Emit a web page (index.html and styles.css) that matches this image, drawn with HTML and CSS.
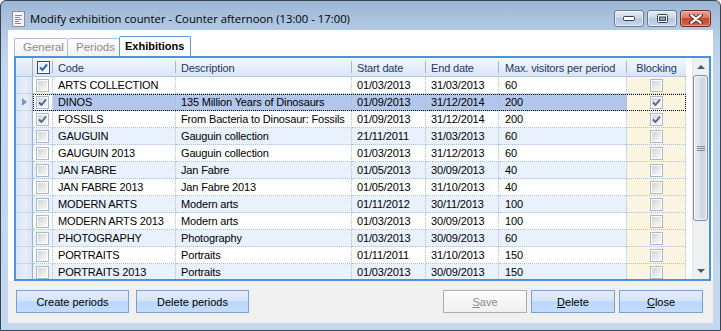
FILE: index.html
```html
<!DOCTYPE html>
<html>
<head>
<meta charset="utf-8">
<link rel="stylesheet" href="styles.css">
</head>
<body>
<div class="window">
  <div class="titlebar">
    <svg class="app-icon" width="13" height="16" viewBox="0 0 13 16">
      <rect x="0.5" y="0.5" width="12" height="15" fill="#ebe9f4" stroke="#8f8aa8"/>
      <rect x="1.5" y="1.5" width="10" height="13" fill="#f7f6fb"/>
      <line x1="3" y1="4.5" x2="10" y2="4.5" stroke="#8a86a4"/>
      <line x1="3" y1="6.5" x2="8" y2="6.5" stroke="#8a86a4"/>
      <line x1="3" y1="8.5" x2="10" y2="8.5" stroke="#8a86a4"/>
      <line x1="3" y1="10.5" x2="7" y2="10.5" stroke="#8a86a4"/>
      <line x1="3" y1="12.5" x2="9" y2="12.5" stroke="#8a86a4"/>
    </svg>
    <div class="title">Modify exhibition counter - Counter afternoon (13:00 - 17:00)</div>
    <div class="caption-buttons">
      <div class="cap-btn">
        <svg width="12" height="5" viewBox="0 0 12 5"><rect x="0.5" y="0.5" width="11" height="4" rx="1" fill="#fff" stroke="#34404f"/></svg>
      </div>
      <div class="cap-btn">
        <svg width="11" height="9" viewBox="0 0 11 9"><rect x="0.5" y="0.5" width="10" height="8" rx="1" fill="#fff" stroke="#34404f"/><rect x="2.5" y="3" width="6" height="3.5" fill="#8ea3bd" stroke="#34404f"/></svg>
      </div>
      <div class="cap-btn close">
        <svg width="14" height="10" viewBox="0 0 14 10"><path d="M2 1 L12 9 M12 1 L2 9" stroke="#5a1e16" stroke-width="4" stroke-linecap="round"/><path d="M2.2 1.2 L11.8 8.8 M11.8 1.2 L2.2 8.8" stroke="#fff" stroke-width="2.2" stroke-linecap="round"/></svg>
      </div>
    </div>
  </div>

  <div class="client">
    <div class="top">
      <div class="tabs">
        <div class="tab">General</div>
        <div class="tab">Periods</div>
        <div class="tab active">Exhibitions</div>
      </div>
      <div class="page">
        <div class="table">
          <div class="row head">
            <div class="rh"></div>
            <div class="c chk"><span class="cb head-cb"><svg width="9" height="9" viewBox="0 0 9 9"><path d="M1 4.5 L3.5 7 L8 1.5" fill="none" stroke="#2f66b6" stroke-width="2"/></svg></span></div>
            <div class="c code">Code</div>
            <div class="c desc">Description</div>
            <div class="c start">Start date</div>
            <div class="c end">End date</div>
            <div class="c max">Max. visitors per period</div>
            <div class="c block">Blocking</div>
          </div>

          <div class="row">
            <div class="rh"></div>
            <div class="c chk"><span class="cb"></span></div>
            <div class="c code">ARTS COLLECTION</div>
            <div class="c desc"></div>
            <div class="c start">01/03/2013</div>
            <div class="c end">31/03/2013</div>
            <div class="c max">60</div>
            <div class="c block"><span class="cb"></span></div>
          </div>

          <div class="row alt selected">
            <div class="rh"><span class="arrow"></span></div>
            <div class="c chk"><span class="cb"><svg width="9" height="9" viewBox="0 0 9 9"><path d="M1 4.5 L3.5 7 L8 1.5" fill="none" stroke="#51627f" stroke-width="1.8"/></svg></span></div>
            <div class="c code">DINOS</div>
            <div class="c desc">135 Million Years of Dinosaurs</div>
            <div class="c start">01/09/2013</div>
            <div class="c end">31/12/2014</div>
            <div class="c max">200</div>
            <div class="c block"><span class="cb"><svg width="9" height="9" viewBox="0 0 9 9"><path d="M1 4.5 L3.5 7 L8 1.5" fill="none" stroke="#51627f" stroke-width="1.8"/></svg></span></div>
          </div>

          <div class="row">
            <div class="rh"></div>
            <div class="c chk"><span class="cb"><svg width="9" height="9" viewBox="0 0 9 9"><path d="M1 4.5 L3.5 7 L8 1.5" fill="none" stroke="#51627f" stroke-width="1.8"/></svg></span></div>
            <div class="c code">FOSSILS</div>
            <div class="c desc">From Bacteria to Dinosaur: Fossils</div>
            <div class="c start">01/09/2013</div>
            <div class="c end">31/12/2014</div>
            <div class="c max">200</div>
            <div class="c block"><span class="cb"><svg width="9" height="9" viewBox="0 0 9 9"><path d="M1 4.5 L3.5 7 L8 1.5" fill="none" stroke="#51627f" stroke-width="1.8"/></svg></span></div>
          </div>

          <div class="row alt">
            <div class="rh"></div>
            <div class="c chk"><span class="cb"></span></div>
            <div class="c code">GAUGUIN</div>
            <div class="c desc">Gauguin collection</div>
            <div class="c start">21/11/2011</div>
            <div class="c end">31/03/2013</div>
            <div class="c max">60</div>
            <div class="c block"><span class="cb"></span></div>
          </div>

          <div class="row">
            <div class="rh"></div>
            <div class="c chk"><span class="cb"></span></div>
            <div class="c code">GAUGUIN 2013</div>
            <div class="c desc">Gauguin collection</div>
            <div class="c start">01/03/2013</div>
            <div class="c end">31/12/2013</div>
            <div class="c max">60</div>
            <div class="c block"><span class="cb"></span></div>
          </div>

          <div class="row alt">
            <div class="rh"></div>
            <div class="c chk"><span class="cb"></span></div>
            <div class="c code">JAN FABRE</div>
            <div class="c desc">Jan Fabre</div>
            <div class="c start">01/05/2013</div>
            <div class="c end">30/09/2013</div>
            <div class="c max">40</div>
            <div class="c block"><span class="cb"></span></div>
          </div>

          <div class="row">
            <div class="rh"></div>
            <div class="c chk"><span class="cb"></span></div>
            <div class="c code">JAN FABRE 2013</div>
            <div class="c desc">Jan Fabre 2013</div>
            <div class="c start">01/05/2013</div>
            <div class="c end">31/10/2013</div>
            <div class="c max">40</div>
            <div class="c block"><span class="cb"></span></div>
          </div>

          <div class="row alt">
            <div class="rh"></div>
            <div class="c chk"><span class="cb"></span></div>
            <div class="c code">MODERN ARTS</div>
            <div class="c desc">Modern arts</div>
            <div class="c start">01/11/2012</div>
            <div class="c end">30/11/2013</div>
            <div class="c max">100</div>
            <div class="c block"><span class="cb"></span></div>
          </div>

          <div class="row">
            <div class="rh"></div>
            <div class="c chk"><span class="cb"></span></div>
            <div class="c code">MODERN ARTS 2013</div>
            <div class="c desc">Modern arts</div>
            <div class="c start">01/03/2013</div>
            <div class="c end">30/09/2013</div>
            <div class="c max">100</div>
            <div class="c block"><span class="cb"></span></div>
          </div>

          <div class="row alt">
            <div class="rh"></div>
            <div class="c chk"><span class="cb"></span></div>
            <div class="c code">PHOTOGRAPHY</div>
            <div class="c desc">Photography</div>
            <div class="c start">01/03/2013</div>
            <div class="c end">30/09/2013</div>
            <div class="c max">60</div>
            <div class="c block"><span class="cb"></span></div>
          </div>

          <div class="row">
            <div class="rh"></div>
            <div class="c chk"><span class="cb"></span></div>
            <div class="c code">PORTRAITS</div>
            <div class="c desc">Portraits</div>
            <div class="c start">01/11/2011</div>
            <div class="c end">31/10/2013</div>
            <div class="c max">150</div>
            <div class="c block"><span class="cb"></span></div>
          </div>

          <div class="row alt">
            <div class="rh"></div>
            <div class="c chk"><span class="cb"></span></div>
            <div class="c code">PORTRAITS 2013</div>
            <div class="c desc">Portraits</div>
            <div class="c start">01/03/2013</div>
            <div class="c end">30/09/2013</div>
            <div class="c max">150</div>
            <div class="c block"><span class="cb"></span></div>
          </div>
        </div>

        <div class="scrollbar">
          <div class="sb-btn"><span class="tri up"></span></div>
          <div class="sb-thumb"><span class="grip"></span><span class="grip"></span><span class="grip"></span></div>
          <div class="sb-track"></div>
          <div class="sb-btn"><span class="tri down"></span></div>
        </div>
      </div>
    </div>

    <div class="buttons">
      <div class="btn wide">Create periods</div>
      <div class="btn wide">Delete periods</div>
      <div class="spacer"></div>
      <div class="btn disabled"><u>S</u>ave</div>
      <div class="btn"><u>D</u>elete</div>
      <div class="btn"><u>C</u>lose</div>
    </div>
  </div>
</div>
</body>
</html>
```

FILE: styles.css
```css
* { box-sizing: border-box; }

html, body {
  margin: 0;
  padding: 0;
  background: #ffffff;
}

body {
  font-family: "Liberation Sans", Arial, sans-serif;
  font-size: 11px;
  color: #000;
}

.window {
  width: 721px;
  height: 331px;
  display: flex;
  flex-direction: column;
  border: 1px solid #3a4350;
  border-radius: 6px 6px 0 0;
  padding: 0 7px 7px;
  background: linear-gradient(#9bb6d5 0px, #b3cae4 29px, #c2d6ed 60px, #c4d8ee 100%);
}

/* ---------- title bar ---------- */
.titlebar {
  height: 29px;
  display: flex;
  align-items: flex-start;
  flex-shrink: 0;
}

.app-icon {
  margin: 10px 0 0 4px;
  flex-shrink: 0;
}

.title {
  margin: 9px 0 0 5px;
  font-family: "Open Sans", "Noto Sans", sans-serif;
  font-size: 11.3px;
  line-height: 18px;
  color: #000;
  white-space: nowrap;
  flex: 1;
}

.caption-buttons {
  display: flex;
  gap: 3px;
  margin: 9px 2px 0 0;
}

.cap-btn {
  width: 30px;
  height: 17px;
  border: 1px solid #6b7b92;
  border-radius: 3px;
  display: flex;
  align-items: center;
  justify-content: center;
  background: linear-gradient(#e4ecf6 0%, #cbd9ea 45%, #b4c8e1 50%, #c6d7eb 100%);
  box-shadow: inset 0 0 0 1px rgba(255,255,255,0.55);
}

.cap-btn.close {
  width: 31px;
  border-color: #6e2a20;
  background: linear-gradient(#e9a493 0%, #d77a66 45%, #c44a35 50%, #d1624d 100%);
  box-shadow: inset 0 0 0 1px rgba(255,210,200,0.5);
}

/* ---------- client ---------- */
.client {
  flex: 1;
  display: flex;
  flex-direction: column;
  background: #f0f0f0;
}

.top {
  background: #ffffff;
  padding: 0 2px 0 6px;
}

.tabs {
  height: 26px;
  display: flex;
  align-items: flex-end;
}

.tab {
  height: 18px;
  padding: 0 0 0 8px;
  border: 1px solid #a9c2de;
  border-bottom: none;
  border-right: none;
  background: linear-gradient(#ffffff, #f1f1f1);
  color: #8b8b8b;
  font-size: 11.5px;
  line-height: 17px;
  border-radius: 2px 2px 0 0;
}

.tab:nth-child(1) { width: 53px; }
.tab:nth-child(2) { width: 52px; }

.tab.active {
  width: 72px;
  height: 20px;
  border: 1px solid #5c9ad8;
  border-bottom: none;
  background: #ffffff;
  color: #000;
  font-weight: bold;
  font-size: 11px;
  line-height: 19px;
  padding-left: 5px;
}

.page {
  height: 225px;
  border: 2px solid #4b92dc;
  display: flex;
  overflow: hidden;
  background: #ffffff;
}

/* ---------- grid ---------- */
.table {
  width: 676px;
  flex-shrink: 0;
  overflow: hidden;
  letter-spacing: -0.15px;
}

.row {
  display: flex;
  width: 670px;
  height: 17px;
  background: #ffffff;
  position: relative;
}

.row.alt { background: #e9f1fc; }

.row.head {
  height: 19px;
  background: linear-gradient(#f4f8fc 0%, #e6eef9 50%, #dae5f4 100%);
  border-bottom: 1px solid #b3c7e2;
  color: #1b3a63;
}

.rh {
  width: 17px;
  flex-shrink: 0;
  background: linear-gradient(90deg, #dae5f3 0%, #e6eef8 60%, #d7e3f2 100%);
  border-right: 1px solid #97b2d6;
  border-bottom: 1px solid #c2d3ea;
  display: flex;
  align-items: center;
  justify-content: center;
}

.row.head .rh {
  background: linear-gradient(#eef3fa, #d8e4f3);
  border-bottom: none;
}

.arrow {
  width: 0;
  height: 0;
  border-left: 5px solid #7097cc;
  border-top: 4px solid transparent;
  border-bottom: 4px solid transparent;
  margin-left: 1px;
}

.c {
  flex-shrink: 0;
  height: 100%;
  padding-left: 5px;
  line-height: 16px;
  white-space: nowrap;
  overflow: hidden;
  border-right: 1px dotted #a6bfe2;
  border-bottom: 1px dotted #a6bfe2;
}

.row.head .c {
  border: none;
  padding-top: 2px;
  line-height: 16px;
  background: linear-gradient(#a0b7d6, #a0b7d6) right 3px / 1px 12px no-repeat;
}

.row.head .c.chk { padding-top: 0; }
.row.head .c.block { background: none; }

.chk {
  width: 20px;
  padding-left: 0;
  display: flex;
  align-items: center;
  justify-content: center;
}

.code { width: 123px; }
.desc { width: 176px; }
.start { width: 74px; }
.end { width: 73px; }
.max { width: 128px; padding-left: 6px; }
.block {
  width: 59px;
  padding-left: 0;
  display: flex;
  align-items: center;
  justify-content: center;
  background: #fcf6e0;
}

.row.head .block { padding-left: 0; }

.row.selected .code,
.row.selected .desc,
.row.selected .start,
.row.selected .end,
.row.selected .max {
  background: #b3c7ea;
}

.row.selected .chk { background: #ffffff; }

.row.selected::after {
  content: "";
  position: absolute;
  left: 17px;
  right: 0;
  top: 0;
  bottom: 0;
  border: 1px dotted #000;
  pointer-events: none;
}

/* checkboxes */
.cb {
  width: 13px;
  height: 13px;
  border: 1px solid #a8b8cf;
  background: linear-gradient(135deg, #cfcfcf 0%, #e9e9e9 55%, #fbfbfb 100%);
  box-shadow: inset 0 0 0 1px #ffffff;
  display: flex;
  align-items: center;
  justify-content: center;
}

.cb.head-cb {
  border: 1px solid #2b4c7e;
  background: linear-gradient(135deg, #d9e6f6, #ffffff);
}

/* ---------- scrollbar ---------- */
.scrollbar {
  width: 17px;
  flex-shrink: 0;
  display: flex;
  flex-direction: column;
  background: #eef0f2;
  border-left: 1px solid #e2e5e9;
}

.sb-btn {
  height: 17px;
  flex-shrink: 0;
  display: flex;
  align-items: center;
  justify-content: center;
}

.tri {
  width: 0;
  height: 0;
  border-left: 4px solid transparent;
  border-right: 4px solid transparent;
}

.tri.up { border-bottom: 4px solid #4a5a73; }
.tri.down { border-top: 4px solid #4a5a73; }

.sb-thumb {
  height: 146px;
  flex-shrink: 0;
  margin: 0 1px 0 0;
  border: 1px solid #7f8ea9;
  border-radius: 3px;
  background: linear-gradient(90deg, #e9edf3 0%, #dde3ec 45%, #cfd7e3 55%, #d8dee8 100%);
  box-shadow: inset 0 0 0 1px rgba(255,255,255,0.6);
  display: flex;
  flex-direction: column;
  align-items: center;
  justify-content: center;
  gap: 1px;
}

.grip {
  width: 8px;
  height: 1px;
  background: #7c8aa2;
}

.sb-track { flex: 1; }

/* ---------- buttons ---------- */
.buttons {
  display: flex;
  padding: 9px 10px 0 8px;
  gap: 7px;
}

.spacer { flex: 1; }

.btn {
  width: 84px;
  height: 23px;
  border: 1px solid #7ba1d1;
  background: linear-gradient(#e1edfc 0%, #d4e6fc 45%, #bcd7fb 55%, #c3dcfc 100%);
  display: flex;
  align-items: center;
  justify-content: center;
  font-size: 11px;
  color: #000;
}

.btn.wide { width: 113px; }

.btn.disabled {
  border-color: #adadad;
  background: linear-gradient(#fbfbfb, #f0f0f0);
  color: #8a8a8a;
}

.btn + .btn:not(.wide) { margin-left: -3px; }
```
